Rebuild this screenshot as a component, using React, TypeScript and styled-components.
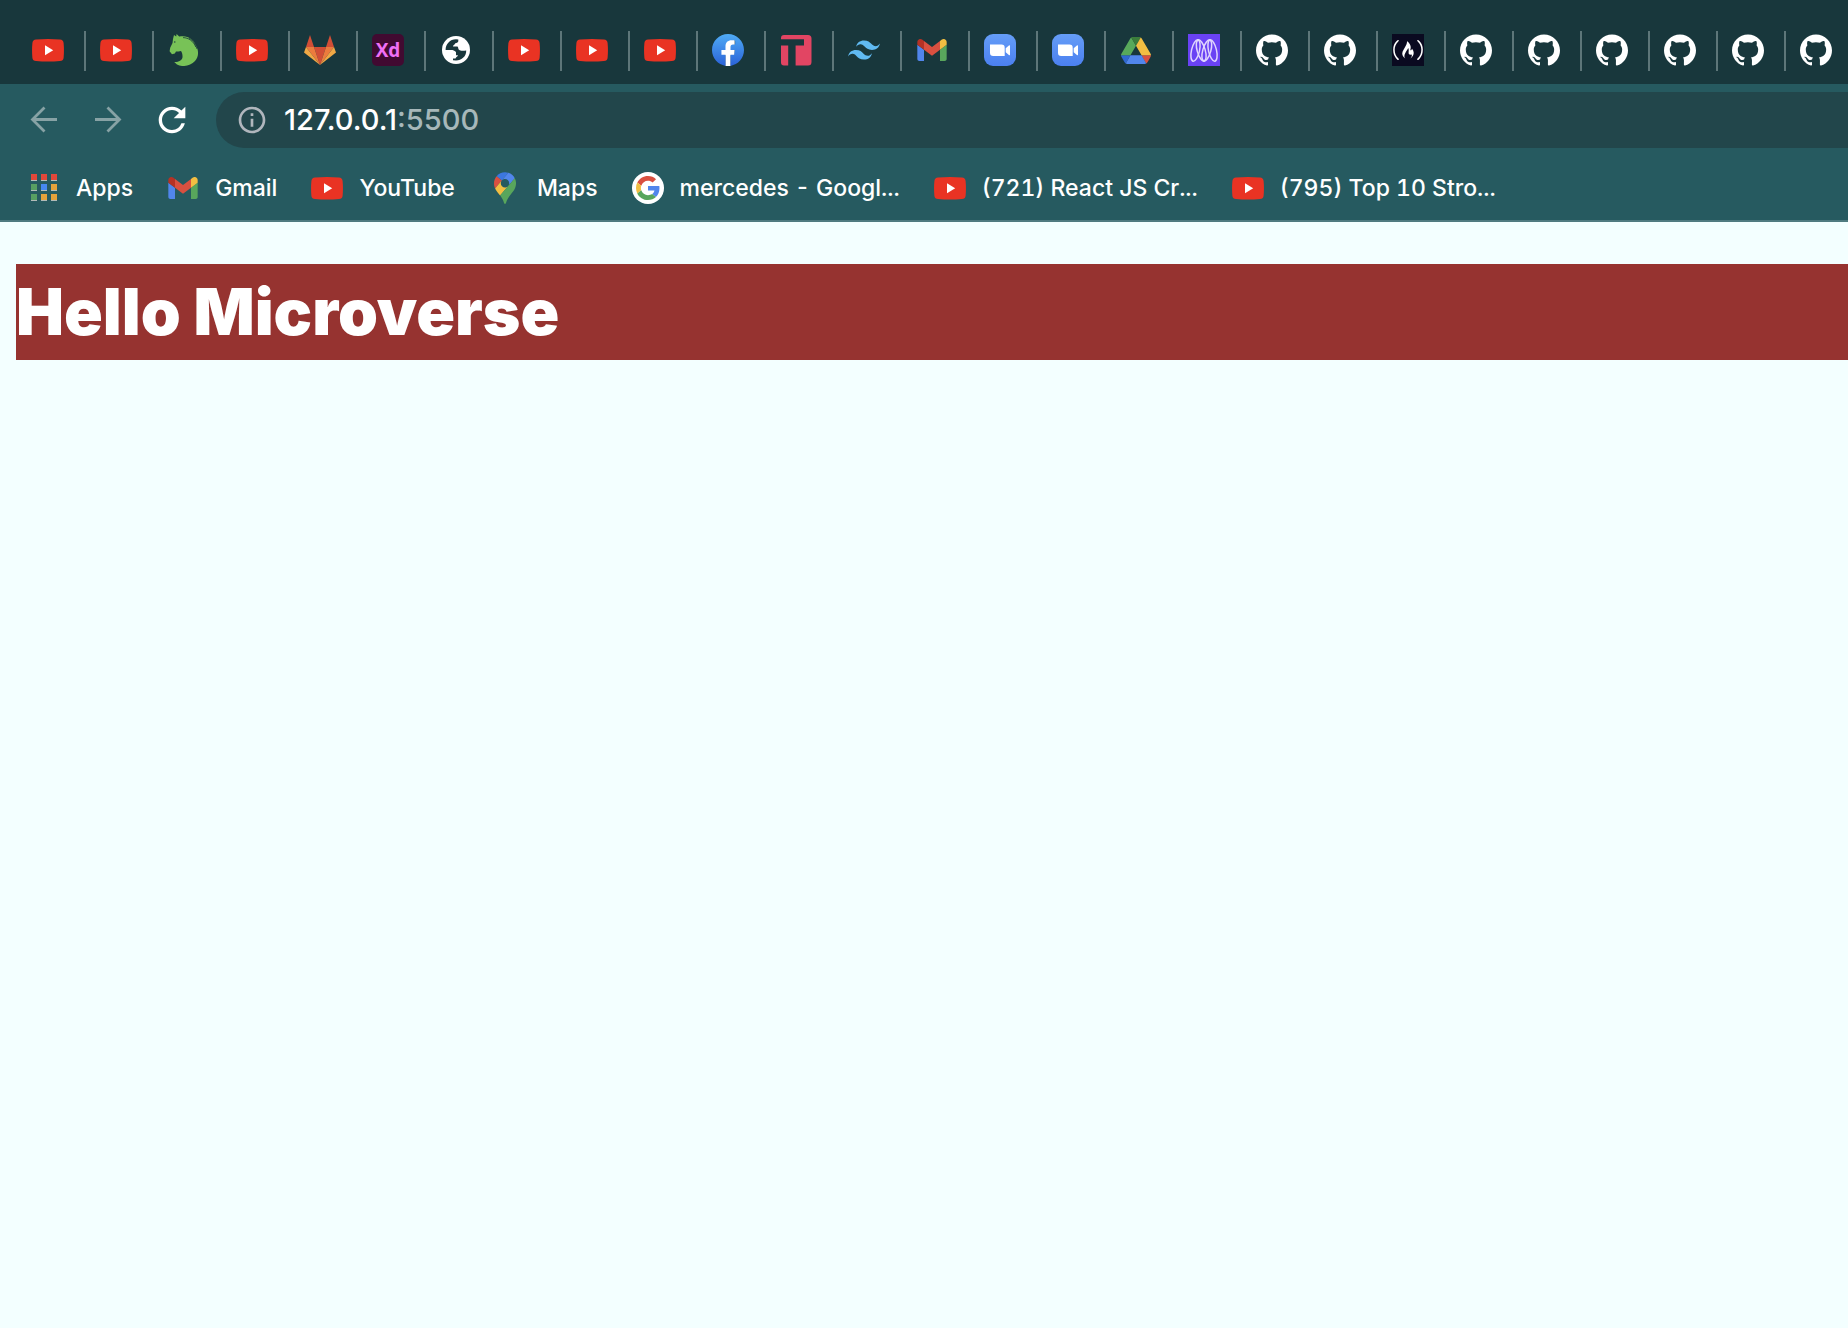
import React from "react";
import styled, { createGlobalStyle } from "styled-components";
import { MdInfoOutline, MdRefresh } from "react-icons/md";
import { SiGithub, SiTailwindcss } from "react-icons/si";
import { FaFreeCodeCamp } from "react-icons/fa";

const GlobalStyle = createGlobalStyle`
  *, *::before, *::after { box-sizing: border-box; }
  body {
    margin: 0;
    background: #f3ffff;
    font-family: Inter, "Liberation Sans", sans-serif;
  }
`;

const Window = styled.div`
  display: flex;
  flex-direction: column;
  min-height: 100vh;
  overflow: hidden;
`;

const TabStrip = styled.nav`
  display: flex;
  align-items: center;
  height: 84px;
  padding: 18px 0 0 18px;
  overflow: hidden;
  background: #18373c;
`;

const Tab = styled.button`
  display: flex;
  flex: none;
  align-items: center;
  width: 68px;
  height: 40px;
  padding: 0 0 2px 14px;
  border: 0;
  border-right: 2px solid #5d7679;
  background: none;
  color: #ffffff;
  cursor: pointer;

  &:last-child {
    border-right-color: transparent;
  }
`;

const IconBox = styled.span<{ $fill?: string; $radius?: number }>`
  display: flex;
  flex: none;
  align-items: center;
  justify-content: center;
  width: 32px;
  height: 32px;
  border-radius: ${(p) => p.$radius ?? 0}px;
  background: ${(p) => p.$fill ?? "none"};
`;

const XdLetters = styled.span`
  color: #f06ff5;
  font: 700 19px/24px "Open Sans", "Noto Sans", sans-serif;
`;

const Toolbar = styled.header`
  border-bottom: 2px solid #4f7b80;
  background: #265a60;
`;

const AddressRow = styled.div`
  display: flex;
  align-items: center;
  padding: 8px 0 8px 24px;
`;

const NavButtons = styled.div`
  display: flex;
  flex: none;
  gap: 24px;
  margin-right: 24px;
`;

const NavButton = styled.button<{ $active?: boolean }>`
  display: flex;
  width: 40px;
  height: 40px;
  padding: 0;
  border: 0;
  background: none;
  color: ${(p) => (p.$active ? "#ffffff" : "#87a2a5")};
  cursor: pointer;
`;

const Omnibox = styled.label`
  display: flex;
  flex: 1;
  align-items: center;
  height: 56px;
  padding-left: 20px;
  border-radius: 28px 0 0 28px;
  background: #22464b;
  color: #a7b8ba;
  font-size: 29px;
  font-weight: 500;
  line-height: 36px;
`;

const SiteInfo = styled.span`
  display: flex;
  margin-right: 16px;
  color: #b0b6bd;
`;

const UrlInput = styled.input`
  field-sizing: content;
  padding: 0;
  border: 0;
  outline: 0;
  background: none;
  color: #ffffff;
  font: inherit;
`;

const BookmarkBar = styled.nav`
  display: flex;
  align-items: center;
  gap: 34px;
  height: 64px;
  padding-left: 28px;
`;

const Bookmark = styled.a`
  display: flex;
  flex: none;
  align-items: center;
  gap: 16px;
  color: #ffffff;
  font-size: 23px;
  font-weight: 500;
  font-variant-numeric: tabular-nums;
  line-height: 32px;
  text-decoration: none;
  white-space: nowrap;
`;

const Page = styled.main`
  flex: 1;
  padding: 42px 0 0 16px;
  background: #f3ffff;
`;

const Heading = styled.h1`
  margin: 0;
  background: #963330;
  color: #ffffff;
  font-size: 64px;
  font-weight: 900;
  line-height: 96px;
`;

const Arrow = ({ forward }: { forward?: boolean }) => (
  <svg width="40" height="40" viewBox="0 0 40 40" fill="none" stroke="currentColor" strokeWidth="2.8">
    <path d={forward ? "M7 19.500h25M19.500 7.500l12 12-12 12" : "M33 19.500H8M20.500 7.500l-12 12 12 12"} />
  </svg>
);

const YouTube = () => (
  <svg width="32" height="32" viewBox="0 0 32 32">
    <path
      fill="#e93323"
      d="M4 5.500Q16 4.500 28 5.500Q31.200 5.800 31.600 9Q32.300 16 31.600 24Q31.200 26.800 28 27Q16 28 4 27Q.8 26.800 .4 24Q-.3 16 .4 9Q.8 5.800 4 5.500Z"
    />
    <path fill="#fff" d="M13 11.200v10l8.200-5z" />
  </svg>
);

const Horse = () => (
  <svg width="32" height="32" viewBox="0 0 32 32">
    <path
      fill="#78c257"
      d="M6 1l2.200 1.600L8.600 0l2.600 2.600C19 .8 25.500 5 27.500 10.500c3.500 6 3.500 12-.5 16.500-4.500 5-13 6.500-18 3.500L6.200 28c4 .3 8-1.500 8.300-4.800.2-2.600-.6-4.700-1.500-6.200-1.500.8-3.700.2-5 .6L6.800 19.600 4 20.300 1.600 17.300l.6-3.500L4.500 9 5 5z"
    />
    <path
      fill="none"
      stroke="#18373c"
      strokeWidth=".8"
      d="M15 3.600c5.500 0 10.500 3.600 12.800 9.400M21 4c4 2 6.500 5.500 8 11"
    />
    <circle cx="6.800" cy="8" r=".7" fill="#18373c" />
  </svg>
);

const GitLab = () => (
  <svg width="32" height="32" viewBox="0 0 32 32">
    <path fill="#d14e36" d="M2 13L6 1l4 12zM22 13l4-12 4 12zM10 13h12l-6 18z" />
    <path fill="#ec7b3d" d="M2 13h8l6 18zM30 13h-8l-6 18z" />
    <path fill="#f0a845" d="M2 13L0 18.500 16 31zM30 13l2 5.500L16 31z" />
  </svg>
);

const Globe = () => (
  <svg width="32" height="32" viewBox="0 0 32 32">
    <circle cx="16" cy="16" r="14" fill="#fff" />
    <path
      fill="#18373c"
      d="M5.600 16C5.600 10 10 5.400 16 5.300l2.300.3V7c0 1.600-1.500 2-3 2.200-.6 2-2.300 1.600-2.300 3.200h4.500c1 .8.6 2.600 1.500 3.400 1.500 1.400 4.500 1 7.200.7.300 5.600-4.500 10-10.200 10.100L13 26.200V24.500h2.500c.6-1.500 2-1.800 2.500-3.200h-2v-3c-.6-1.200-1.700-1.800-3.500-2.300z"
    />
  </svg>
);

const Facebook = () => (
  <svg width="32" height="32" viewBox="0 0 24 24">
    <defs>
      <linearGradient id="facebookBlue" x1="0" y1="0" x2="0" y2="1">
        <stop offset="0" stopColor="#4fabf5" />
        <stop offset="1" stopColor="#2a62d8" />
      </linearGradient>
    </defs>
    <path fill="#fff" d="M6.500 4h10.500v12h-3v8h-4v-8H6.500z" />
    <path
      fill="url(#facebookBlue)"
      d="M24 12.073c0-6.627-5.373-12-12-12s-12 5.373-12 12c0 5.990 4.388 10.954 10.125 11.854v-8.385H7.078v-3.470h3.047V9.430c0-3.007 1.792-4.669 4.533-4.669 1.312 0 2.686.235 2.686.235v2.953H15.830c-1.491 0-1.956.925-1.956 1.874v2.250h3.328l-.532 3.470h-2.796v8.385C19.612 23.027 24 18.062 24 12.073z"
    />
  </svg>
);

const TBrand = () => (
  <svg width="32" height="32" viewBox="0 0 32 32">
    <path
      fill="#e24563"
      d="M1 5.200V4q0-3 3-3h24q3.500 0 3.500 3.500v23.500q0 3.500-3.500 3.500H15.600V11.500H24V5.200zM1 11.500h7.200v20H4q-3 0-3-3z"
    />
  </svg>
);

const Gmail = () => (
  <svg width="30" height="22" viewBox="52 42 88 66">
    <path fill="#5186ec" d="M58 108h14V74L52 59v43c0 3.320 2.690 6 6 6" />
    <path fill="#58a65c" d="M120 108h14c3.320 0 6-2.690 6-6V59l-20 15" />
    <path fill="#f2be42" d="M120 48v26l20-15v-8c0-7.420-8.470-11.650-14.400-7.200" />
    <path fill="#d95040" d="M72 74V48l24 18 24-18v26L96 92" />
    <path fill="#b63225" d="M52 51v8l20 15V48l-5.600-4.200c-5.940-4.450-14.400-.22-14.400 7.200" />
  </svg>
);

const Zoom = () => (
  <svg width="32" height="32" viewBox="0 0 32 32">
    <defs>
      <linearGradient id="zoomBlue" x1="0" y1="0" x2="0" y2="1">
        <stop offset="0" stopColor="#659df7" />
        <stop offset="1" stopColor="#4b80f0" />
      </linearGradient>
    </defs>
    <rect width="32" height="32" rx="9" fill="url(#zoomBlue)" />
    <path
      fill="#fff"
      d="M6 10.500h11.500a3.200 3.200 0 0 1 3.200 3.200V22H9.200A3.200 3.200 0 0 1 6 18.800zM21.700 14.200l3.200-2.700q1.100-.7 1.100.5v8.500q0 1.200-1.100.5l-3.200-2.700z"
    />
  </svg>
);

const Drive = () => (
  <svg width="30" height="27" viewBox="0 0 87.3 78">
    <path fill="#3068d0" d="m6.600 66.850 3.850 6.650c.8 1.400 1.950 2.500 3.300 3.300l13.750-23.800h-27.500c0 1.550.4 3.100 1.200 4.500z" />
    <path fill="#58a95b" d="m43.650 25-13.750-23.800c-1.350.8-2.500 1.900-3.300 3.300l-25.400 44a9.060 9.060 0 0 0 -1.200 4.500h27.500z" />
    <path fill="#d95040" d="m73.550 76.800c1.350-.8 2.500-1.900 3.300-3.300l1.600-2.750 7.650-13.250c.8-1.400 1.200-2.950 1.200-4.500h-27.502l5.852 11.500z" />
    <path fill="#3a7d3b" d="m43.650 25 13.750-23.800c-1.350-.8-2.900-1.200-4.500-1.200h-18.500c-1.600 0-3.150.45-4.500 1.200z" />
    <path fill="#5186ec" d="m59.800 53h-32.300l-13.750 23.800c1.350.8 2.900 1.200 4.500 1.200h50.800c1.600 0 3.150-.45 4.500-1.200z" />
    <path fill="#f2be42" d="m73.400 26.500-12.700-22c-.8-1.400-1.950-2.500-3.300-3.300l-13.750 23.800 16.150 28h27.450c0-1.550-.4-3.100-1.200-4.500z" />
  </svg>
);

const Microverse = () => (
  <svg width="32" height="32" viewBox="0 0 32 32">
    <rect width="32" height="32" fill="#6a42f4" />
    <g fill="none" stroke="#e0d5fd" strokeWidth="1.500">
      <ellipse cx="7.500" cy="16.500" rx="4" ry="11" transform="rotate(13 7.500 16.500)" />
      <ellipse cx="13.200" cy="16.500" rx="4" ry="11" transform="rotate(-16 13.200 16.500)" />
      <ellipse cx="18.800" cy="16.500" rx="4" ry="11" transform="rotate(16 18.800 16.500)" />
      <ellipse cx="24.500" cy="16.500" rx="4" ry="11" transform="rotate(-13 24.500 16.500)" />
    </g>
  </svg>
);

const AppsGrid = () => {
  const colours = ["#e2483a", "#e2483a", "#e2483a", "#589f62", "#4688f0", "#e5a23b", "#589f62", "#e5a23b", "#e5a23b"];
  return (
    <svg width="32" height="32" viewBox="0 0 32 32">
      {colours.map((colour, i) => {
        const x = 3 + (i % 3) * 10;
        const y = 2 + Math.floor(i / 3) * 10;
        return (
          <g key={i}>
            <rect x={x} y={y} width="6" height="7" fill="#b3bcb9" />
            <rect x={x} y={y} width="6" height="6" fill={colour} />
          </g>
        );
      })}
    </svg>
  );
};

const MapsPin = () => (
  <svg width="22" height="32" viewBox="0 0 92.3 132.3">
    <path fill="#3c77df" d="M60.200 2.200C55.800.8 51 0 46.100 0 32 0 19.300 6.400 10.800 16.500l21.800 18.300L60.200 2.200z" />
    <path fill="#d95040" d="M10.800 16.500C4.100 24.500 0 34.900 0 46.100c0 8.700 1.700 15.700 4.600 22l28-33.300-21.800-18.300z" />
    <path fill="#5186ec" d="M46.200 28.500c9.800 0 17.700 7.900 17.700 17.700 0 4.300-1.600 8.300-4.200 11.400 0 0 13.900-16.600 27.500-32.700-5.600-10.800-15.300-19-27-22.700L32.600 34.800c3.300-3.800 8.100-6.300 13.600-6.300" />
    <path fill="#f2be42" d="M46.200 63.800c-9.800 0-17.700-7.900-17.700-17.700 0-4.300 1.500-8.300 4.100-11.300l-28 33.300c4.800 10.600 12.800 19.200 21 29.900l34.100-40.500c-3.300 3.900-8.100 6.300-13.500 6.300" />
    <path fill="#58a65c" d="M59.100 109.200c15.400-24.100 33.300-35 33.300-63 0-7.700-1.900-14.900-5.200-21.300L25.600 98c2.600 3.400 5.300 7.300 7.900 11.300 9.400 14.500 6.800 23.100 12.800 23.100s3.400-8.700 12.800-23.200" />
  </svg>
);

const Google = () => (
  <svg width="24" height="24" viewBox="0 0 48 48">
    <path fill="#d95040" d="M24 9.500c3.540 0 6.710 1.220 9.210 3.600l6.850-6.850C35.900 2.380 30.470 0 24 0 14.620 0 6.510 5.380 2.560 13.220l7.980 6.190C12.430 13.720 17.740 9.500 24 9.500z" />
    <path fill="#5186ec" d="M46.980 24.550c0-1.570-.15-3.090-.38-4.550H24v9.020h12.940c-.58 2.960-2.260 5.480-4.780 7.180l7.730 6c4.510-4.180 7.090-10.360 7.090-17.650z" />
    <path fill="#f2be42" d="M10.530 28.590c-.48-1.450-.76-2.990-.76-4.590s.27-3.140.76-4.590l-7.980-6.190C.92 16.460 0 20.120 0 24c0 3.880.92 7.540 2.560 10.780l7.970-6.190z" />
    <path fill="#58a65c" d="M24 48c6.480 0 11.930-2.130 15.890-5.810l-7.730-6c-2.150 1.450-4.920 2.300-8.160 2.300-6.260 0-11.570-4.220-13.470-9.910l-7.980 6.190C6.510 42.620 14.620 48 24 48z" />
  </svg>
);

type Site = { name: string; icon: React.ReactNode; fill?: string; radius?: number };

const youtube: Site = { name: "YouTube", icon: <YouTube /> };
const github: Site = { name: "GitHub", icon: <SiGithub size={32} /> };
const gmail: Site = { name: "Gmail", icon: <Gmail /> };
const zoom: Site = { name: "Zoom", icon: <Zoom /> };

const tabs: Site[] = [
  youtube,
  youtube,
  { name: "Horse", icon: <Horse /> },
  youtube,
  { name: "GitLab", icon: <GitLab /> },
  { name: "Adobe XD", icon: <XdLetters>Xd</XdLetters>, fill: "#410a31", radius: 5 },
  { name: "Website", icon: <Globe /> },
  youtube,
  youtube,
  youtube,
  { name: "Facebook", icon: <Facebook /> },
  { name: "T", icon: <TBrand /> },
  { name: "Tailwind CSS", icon: <SiTailwindcss size={32} color="#60baf2" /> },
  gmail,
  zoom,
  zoom,
  { name: "Google Drive", icon: <Drive /> },
  { name: "Microverse", icon: <Microverse /> },
  github,
  github,
  { name: "freeCodeCamp", icon: <FaFreeCodeCamp size={30} />, fill: "#0a0a20" },
  github,
  github,
  github,
  github,
  github,
  github,
];

const bookmarks: (Site & { label: string })[] = [
  { name: "Apps", label: "Apps", icon: <AppsGrid /> },
  { ...gmail, label: "Gmail" },
  { ...youtube, label: "YouTube" },
  { name: "Maps", label: "Maps", icon: <MapsPin /> },
  { name: "Google", label: "mercedes - Googl...", icon: <Google />, fill: "#ffffff", radius: 16 },
  { ...youtube, label: "(721) React JS Cr..." },
  { ...youtube, label: "(795) Top 10 Stro..." },
];

export default function App() {
  return (
    <Window>
      <GlobalStyle />
      <TabStrip aria-label="Tabs">
        {tabs.map((tab, i) => (
          <Tab key={i} type="button" aria-label={tab.name}>
            <IconBox $fill={tab.fill} $radius={tab.radius}>
              {tab.icon}
            </IconBox>
          </Tab>
        ))}
      </TabStrip>
      <Toolbar>
        <AddressRow>
          <NavButtons>
            <NavButton type="button" aria-label="Back">
              <Arrow />
            </NavButton>
            <NavButton type="button" aria-label="Forward">
              <Arrow forward />
            </NavButton>
            <NavButton type="button" aria-label="Reload" $active>
              <MdRefresh size={40} />
            </NavButton>
          </NavButtons>
          <Omnibox>
            <SiteInfo>
              <MdInfoOutline size={32} />
            </SiteInfo>
            <UrlInput type="text" aria-label="Address" defaultValue="127.0.0.1" />
            <span>:5500</span>
          </Omnibox>
        </AddressRow>
        <BookmarkBar aria-label="Bookmarks">
          {bookmarks.map((mark) => (
            <Bookmark key={mark.label} href="#">
              <IconBox $fill={mark.fill} $radius={mark.radius}>
                {mark.icon}
              </IconBox>
              {mark.label}
            </Bookmark>
          ))}
        </BookmarkBar>
      </Toolbar>
      <Page>
        <Heading>Hello Microverse</Heading>
      </Page>
    </Window>
  );
}
